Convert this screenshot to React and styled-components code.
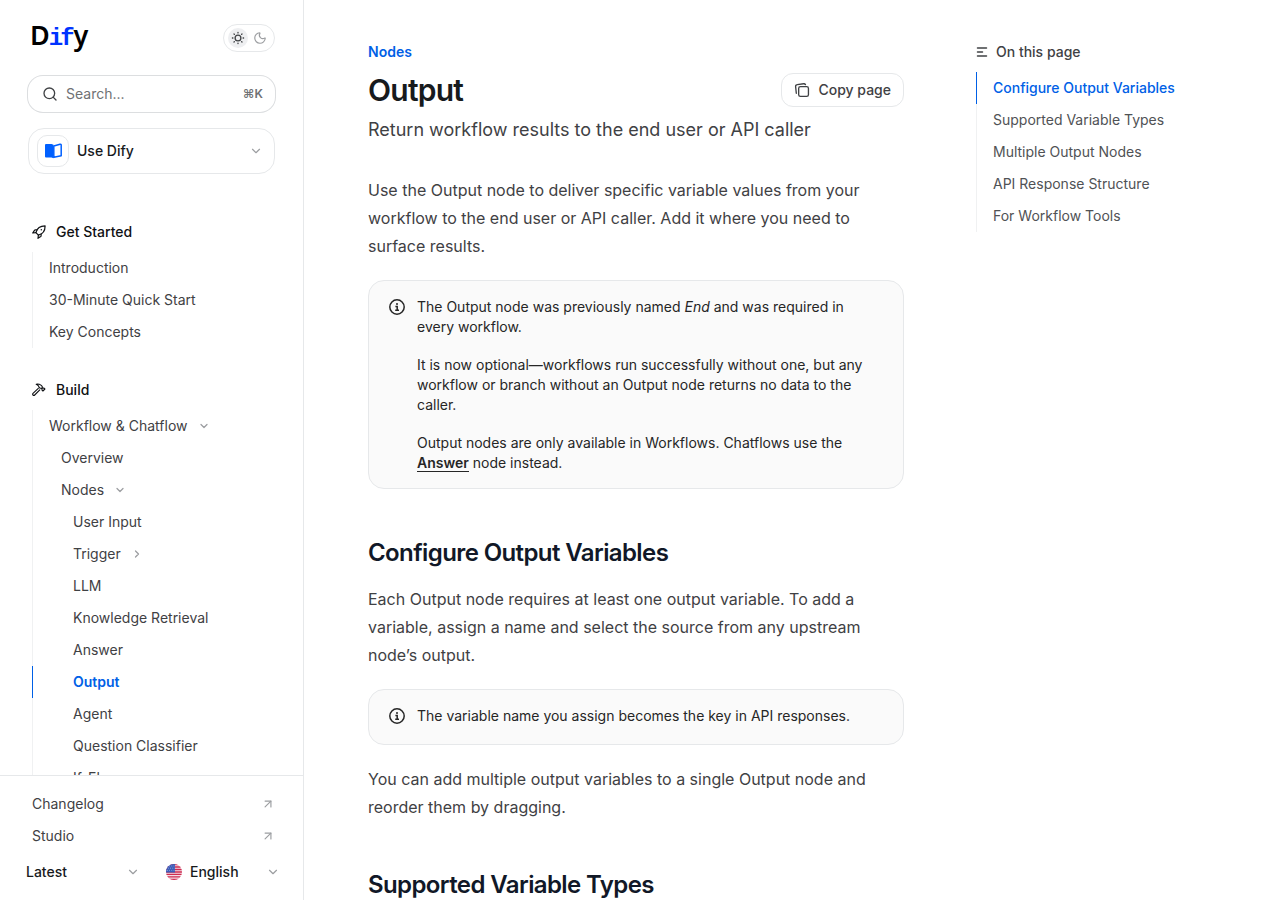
import React from "react";
import styled, { createGlobalStyle, css } from "styled-components";
import { Search, ChevronDown, ChevronRight, ArrowUpRight, Moon } from "lucide-react";

const color = {
  accent: "#0060e6",
  ink: "#171a1d",
  body: "#3f4144",
  muted: "#505255",
  faint: "#9c9ea1",
  line: "#e6e8ea",
  hair: "#f0f1f2",
};

const GlobalStyle = createGlobalStyle`
  *, *::before, *::after { box-sizing: border-box; }
  body {
    margin: 0;
    background: #fff;
    color: ${color.body};
    font-family: Inter, "Liberation Sans", sans-serif;
    font-size: 14px;
    line-height: 20px;
    -webkit-font-smoothing: antialiased;
  }
  h1, h2, p, ul { margin: 0; padding: 0; }
  ul { list-style: none; }
  a { color: inherit; text-decoration: none; }
  button, input, select { font: inherit; color: inherit; }
  svg { flex: none; }
`;

const Page = styled.div`
  display: flex;
  align-items: flex-start;
`;

const Sidebar = styled.aside`
  position: sticky;
  top: 0;
  flex: 0 0 304px;
  min-width: 0;
  height: 100vh;
  display: flex;
  flex-direction: column;
  border-right: 1px solid ${color.line};
`;

const SidebarHead = styled.div`
  display: flex;
  flex-direction: column;
  gap: 16px;
  padding: 24px 28px 0;
`;

const BrandRow = styled.div`
  display: flex;
  justify-content: space-between;
  align-items: flex-start;
  height: 36px;
`;

const Logo = styled.a`
  display: flex;
  align-items: baseline;
  padding-left: 2px;
  font-family: "Noto Sans", sans-serif;
  font-size: 27px;
  font-weight: 600;
  line-height: 22px;
  color: #000;
`;

const LogoBlue = styled.span`
  margin: 0 -1px;
  font-family: "Liberation Mono", monospace;
  font-size: 24px;
  font-weight: 700;
  color: #0033ff;
  & + & { margin-left: -2px; }
`;

const ThemeToggle = styled.button`
  display: flex;
  align-items: center;
  gap: 2px;
  height: 28px;
  padding: 0 4px;
  border: 1px solid ${color.line};
  border-radius: 14px;
  background: none;
`;

const ToggleSide = styled.span`
  display: grid;
  place-items: center;
  width: 20px;
  height: 20px;
  border-radius: 50%;
  color: ${(p) => (p.$on ? "#3f4144" : color.faint)};
  background: ${(p) => (p.$on ? "#eeeff1" : "none")};
`;

const SearchBox = styled.label`
  display: flex;
  align-items: center;
  gap: 8px;
  height: 36px;
  padding: 0 12px 0 14px;
  border-radius: 15px;
  box-shadow: 0 0 0 1px #dcdee0;
  color: ${color.body};
`;

const SearchInput = styled.input`
  flex: 1;
  min-width: 0;
  padding: 0;
  border: 0;
  outline: 0;
  background: none;
  &::placeholder { color: #6f7174; opacity: 1; }
`;

const Shortcut = styled.kbd`
  font-family: inherit;
  font-size: 12px;
  font-weight: 600;
  color: #6f7174;
`;

const ProductBox = styled.div`
  display: flex;
  align-items: center;
  gap: 8px;
  height: 46px;
  padding: 0 11px 0 8px;
  border: 1px solid ${color.line};
  border-radius: 16px;
  color: ${color.faint};
`;

const ProductIcon = styled.span`
  display: grid;
  place-items: center;
  width: 32px;
  height: 32px;
  border: 1px solid ${color.line};
  border-radius: 10px;
`;

const PlainSelect = styled.select`
  flex: 1;
  min-width: 0;
  padding: 0;
  border: 0;
  outline: 0;
  appearance: none;
  background: none;
  font-weight: 500;
  color: ${color.ink};
`;

const NavScroll = styled.nav`
  flex: 1;
  min-height: 0;
  overflow-y: auto;
  scrollbar-width: none;
  display: flex;
  flex-direction: column;
  gap: 32px;
  padding: 48px 28px 0 32px;
`;

const NavGroup = styled.section`
  display: flex;
  flex-direction: column;
  gap: 10px;
`;

const GroupTitle = styled.h2`
  display: flex;
  align-items: center;
  gap: 10px;
  font-size: 14px;
  line-height: 20px;
  font-weight: 500;
  color: #0f1114;
`;

const railItem = css`
  display: flex;
  align-items: center;
  height: 32px;
  border-left: 1px solid ${(p) => (p.$active ? color.accent : color.hair)};
`;

const NavLink = styled.a`
  ${railItem}
  gap: 10px;
  padding-left: ${(p) => 16 + p.$depth * 12}px;
  color: ${(p) => (p.$active ? color.accent : color.body)};
  font-weight: ${(p) => (p.$active ? 600 : 400)};
  svg { color: ${color.faint}; }
`;

const SidebarFoot = styled.div`
  padding: 12px 28px 12px 26px;
  border-top: 1px solid ${color.line};
`;

const FootLink = styled.a`
  display: flex;
  align-items: center;
  justify-content: space-between;
  height: 32px;
  padding: 0 0 0 6px;
  svg { color: ${color.faint}; }
`;

const FootSelects = styled.div`
  display: grid;
  grid-template-columns: 1fr 1fr;
  gap: 26px;
  margin-right: -5px;
  padding-top: 4px;
`;

const FootSelect = styled.div`
  display: flex;
  align-items: center;
  gap: 8px;
  height: 32px;
  color: ${color.faint};
`;

const Main = styled.main`
  flex: 1;
  min-width: 0;
  display: flex;
  gap: 72px;
  padding: 42px 0 0 64px;
`;

const Article = styled.article`
  flex: 1;
  min-width: 0;
`;

const Eyebrow = styled.a`
  display: block;
  font-weight: 600;
  color: ${color.accent};
`;

const TitleRow = styled.div`
  display: flex;
  justify-content: space-between;
  align-items: flex-start;
  margin: 10px 0 8px;
`;

const Title = styled.h1`
  font-size: 30px;
  line-height: 36px;
  font-weight: 600;
  letter-spacing: -0.025em;
  color: ${color.ink};
`;

const CopyButton = styled.button`
  display: flex;
  align-items: center;
  gap: 8px;
  height: 34px;
  margin-top: 1px;
  padding: 0 12px;
  border: 1px solid ${color.line};
  border-radius: 12px;
  background: none;
  font-weight: 500;
  color: ${color.body};
`;

const Lead = styled.p`
  font-size: 18px;
  line-height: 28px;
`;

const Prose = styled.div`
  margin-top: 32px;
  font-size: 16px;
  line-height: 28px;
`;

const Paragraph = styled.p`
  margin: 0 0 20px;
`;

const Heading = styled.h2`
  margin: 48px 0 16px;
  font-size: 24px;
  line-height: 32px;
  font-weight: 600;
  letter-spacing: -0.025em;
  color: #111827;
`;

const CalloutBox = styled.aside`
  display: flex;
  gap: 12px;
  margin: 20px 0;
  padding: 16px 20px 15px;
  border: 1px solid ${color.line};
  border-radius: 16px;
  background: #fafafa;
  color: #262626;
  font-size: 14px;
  line-height: 20px;
`;

const CalloutIcon = styled.span`
  flex: none;
  height: 23px;
  padding-top: 2px;
  svg { display: block; }
`;

const CalloutBody = styled.div`
  display: flex;
  flex-direction: column;
  gap: 18px;
  min-width: 0;
`;

const StrongLink = styled.a`
  font-weight: 600;
  border-bottom: 1px solid currentColor;
`;

const Toc = styled.aside`
  flex: 0 0 304px;
  padding-right: 28px;
`;

const TocTitle = styled.div`
  display: flex;
  align-items: center;
  gap: 8px;
  margin-bottom: 10px;
  font-weight: 500;
`;

const TocLink = styled.a`
  ${railItem}
  padding-left: 16px;
  color: ${(p) => (p.$active ? color.accent : color.muted)};
  font-weight: ${(p) => (p.$active ? 500 : 400)};
`;

const SunIcon = () => (
  <svg width="14" height="14" viewBox="0 0 14 14" fill="none" stroke="currentColor" strokeWidth="1.3" strokeLinecap="round" aria-hidden="true">
    <circle cx="7" cy="7" r="2.9" />
    <path d="M7 1.4v.5M7 12.1v.5M1.4 7h.5M12.1 7h.5M3 3l.4.4M10.6 10.6l.4.4M11 3l-.4.4M3.4 10.6l-.4.4" />
  </svg>
);

const BookIcon = () => (
  <svg width="17" height="16" viewBox="0 0 17 16" aria-hidden="true">
    <path d="M1 1h5.5L8.500 1.800v13.400L6.500 14.500H1a1 1 0 0 1-1-1V2a1 1 0 0 1 1-1z" fill="#0060ff" />
    <path d="M8.800 2.900 15 1.300q1.200-.2 1.200.8v10.700L8.800 14.300z" fill="#fff" stroke="#0060ff" strokeWidth="1.5" strokeLinejoin="round" />
  </svg>
);

const RocketIcon = () => (
  <svg width="14" height="14" viewBox="0 0 14 14" fill="none" stroke="currentColor" strokeWidth="1.2" strokeLinecap="round" strokeLinejoin="round" aria-hidden="true">
    <path d="M3.9 7.6C5 3.4 7.800 .9 13.100 .9c0 5.300-2.500 8.100-6.700 9.200z" />
    <path d="M5 4.900H3.300q-.5 0-.8.400L.7 8l3.200-.4M9.100 9v1.700q0 .5-.4.800L6 13.300l.4-3.200" />
    <circle cx="9.300" cy="4.700" r=".7" fill="currentColor" stroke="none" />
  </svg>
);

const HammerIcon = () => (
  <svg width="14" height="14" viewBox="0 0 14 14" fill="none" stroke="currentColor" strokeWidth="1.1" strokeLinecap="round" strokeLinejoin="round" aria-hidden="true">
    <path d="M6.300 5.300 1 10.300a1.200 1.200 0 0 0 1.700 1.700L7.800 6.800" />
    <path d="M4.200 1.200q2.600-.5 4.700.9l1.300 1.200v1.200l.6.600h1.200l.9.900-2 2-.9-.9V6l-.8-.8H8L6.700 3.900V3.100Q5.700 2 4.200 1.200z" />
  </svg>
);

const CopyIcon = () => (
  <svg width="16" height="16" viewBox="0 0 18 18" fill="none" stroke="currentColor" strokeWidth="1.5" strokeLinecap="round" strokeLinejoin="round" aria-hidden="true">
    <rect x="5.25" y="5.25" width="11" height="11" rx="2" />
    <path d="M2.6 12.7 1.8 5.1a2 2 0 0 1 1.8-2.2l7.3-.9a2 2 0 0 1 2 1" />
  </svg>
);

const InfoIcon = () => (
  <svg width="16" height="16" viewBox="0 0 16 16" fill="none" stroke="currentColor" strokeWidth="1.5" aria-hidden="true">
    <circle cx="8" cy="8" r="7.2" />
    <path d="M6.4 7.5h1.8v3.6M6.2 11.2h3.8" />
    <circle cx="8" cy="4.9" r="1" fill="currentColor" stroke="none" />
  </svg>
);

const ListIcon = () => (
  <svg width="12" height="12" viewBox="0 0 12 12" fill="none" stroke="currentColor" strokeWidth="1.5" strokeLinecap="round" aria-hidden="true">
    <path d="M1.5 2h9M1.5 6h5M1.5 10h9" />
  </svg>
);

const FlagIcon = () => (
  <svg width="16" height="16" viewBox="0 0 16 16" aria-hidden="true">
    <clipPath id="flag-round"><circle cx="8" cy="8" r="8" /></clipPath>
    <g clipPath="url(#flag-round)">
      <path fill="#f3dfe6" d="M0 0h16v16H0z" />
      <path stroke="#cf2b50" strokeWidth="1.3" d="M0 .6h16M0 3h16M0 5.5h16M0 8h16M0 10.4h16M0 12.9h16M0 15.4h16" />
      <path fill="#3c5cb8" d="M0 0h9v8.6H0z" />
      <path stroke="#a9b9e6" strokeWidth=".8" strokeDasharray=".8 1.4" d="M1 2h8M2 4.2h7M1 6.4h8" />
    </g>
  </svg>
);

const navGroups = [
  {
    title: "Get Started",
    Icon: RocketIcon,
    items: [
      { label: "Introduction", depth: 0 },
      { label: "30-Minute Quick Start", depth: 0 },
      { label: "Key Concepts", depth: 0 },
    ],
  },
  {
    title: "Build",
    Icon: HammerIcon,
    items: [
      { label: "Workflow & Chatflow", depth: 0, state: "open" },
      { label: "Overview", depth: 1 },
      { label: "Nodes", depth: 1, state: "open" },
      { label: "User Input", depth: 2 },
      { label: "Trigger", depth: 2, state: "closed" },
      { label: "LLM", depth: 2 },
      { label: "Knowledge Retrieval", depth: 2 },
      { label: "Answer", depth: 2 },
      { label: "Output", depth: 2, active: true },
      { label: "Agent", depth: 2 },
      { label: "Question Classifier", depth: 2 },
      { label: "If-Else", depth: 2 },
    ],
  },
];

const tocItems = [
  "Configure Output Variables",
  "Supported Variable Types",
  "Multiple Output Nodes",
  "API Response Structure",
  "For Workflow Tools",
];

const Callout = ({ children }) => (
  <CalloutBox>
    <CalloutIcon><InfoIcon /></CalloutIcon>
    <CalloutBody>{children}</CalloutBody>
  </CalloutBox>
);

export default function App() {
  return (
    <>
      <GlobalStyle />
      <Page>
        <Sidebar>
          <SidebarHead>
            <BrandRow>
              <Logo href="#" aria-label="Dify">
                <span>D</span><LogoBlue>i</LogoBlue><LogoBlue>f</LogoBlue><span>y</span>
              </Logo>
              <ThemeToggle aria-label="Toggle dark mode">
                <ToggleSide $on><SunIcon /></ToggleSide>
                <ToggleSide><Moon size={14} strokeWidth={2} /></ToggleSide>
              </ThemeToggle>
            </BrandRow>
            <SearchBox>
              <Search size={16} strokeWidth={2} />
              <SearchInput type="search" placeholder="Search..." aria-label="Search" />
              <Shortcut>⌘K</Shortcut>
            </SearchBox>
            <ProductBox>
              <ProductIcon><BookIcon /></ProductIcon>
              <PlainSelect aria-label="Product"><option>Use Dify</option></PlainSelect>
              <ChevronDown size={14} />
            </ProductBox>
          </SidebarHead>

          <NavScroll aria-label="Documentation">
            {navGroups.map(({ title, Icon, items }) => (
              <NavGroup key={title}>
                <GroupTitle><Icon />{title}</GroupTitle>
                <ul>
                  {items.map(({ label, depth, state, active }) => (
                    <li key={label}>
                      <NavLink href="#" $depth={depth} $active={active} aria-current={active ? "page" : undefined}>
                        {label}
                        {state === "open" && <ChevronDown size={12} strokeWidth={2.5} />}
                        {state === "closed" && <ChevronRight size={12} strokeWidth={2.5} />}
                      </NavLink>
                    </li>
                  ))}
                </ul>
              </NavGroup>
            ))}
          </NavScroll>

          <SidebarFoot>
            <FootLink href="#">Changelog<ArrowUpRight size={14} /></FootLink>
            <FootLink href="#">Studio<ArrowUpRight size={14} /></FootLink>
            <FootSelects>
              <FootSelect>
                <PlainSelect aria-label="Version"><option>Latest</option></PlainSelect>
                <ChevronDown size={14} />
              </FootSelect>
              <FootSelect>
                <FlagIcon />
                <PlainSelect aria-label="Language"><option>English</option></PlainSelect>
                <ChevronDown size={14} />
              </FootSelect>
            </FootSelects>
          </SidebarFoot>
        </Sidebar>

        <Main>
          <Article>
            <Eyebrow href="#">Nodes</Eyebrow>
            <TitleRow>
              <Title>Output</Title>
              <CopyButton><CopyIcon />Copy page</CopyButton>
            </TitleRow>
            <Lead>Return workflow results to the end user or API caller</Lead>
            <Prose>
              <Paragraph>
                Use the Output node to deliver specific variable values from your workflow to the
                end user or API caller. Add it where you need to surface results.
              </Paragraph>
              <Callout>
                <p>The Output node was previously named <em>End</em> and was required in every workflow.</p>
                <p>
                  It is now optional—workflows run successfully without one, but any workflow or
                  branch without an Output node returns no data to the caller.
                </p>
                <p>
                  Output nodes are only available in Workflows. Chatflows use the{" "}
                  <StrongLink href="#">Answer</StrongLink> node instead.
                </p>
              </Callout>
              <Heading>Configure Output Variables</Heading>
              <Paragraph>
                Each Output node requires at least one output variable. To add a variable, assign a
                name and select the source from any upstream node’s output.
              </Paragraph>
              <Callout>
                <p>The variable name you assign becomes the key in API responses.</p>
              </Callout>
              <Paragraph>
                You can add multiple output variables to a single Output node and reorder them by
                dragging.
              </Paragraph>
              <Heading>Supported Variable Types</Heading>
            </Prose>
          </Article>

          <Toc>
            <TocTitle><ListIcon />On this page</TocTitle>
            <ul>
              {tocItems.map((label, i) => (
                <li key={label}><TocLink href="#" $active={i === 0}>{label}</TocLink></li>
              ))}
            </ul>
          </Toc>
        </Main>
      </Page>
    </>
  );
}
